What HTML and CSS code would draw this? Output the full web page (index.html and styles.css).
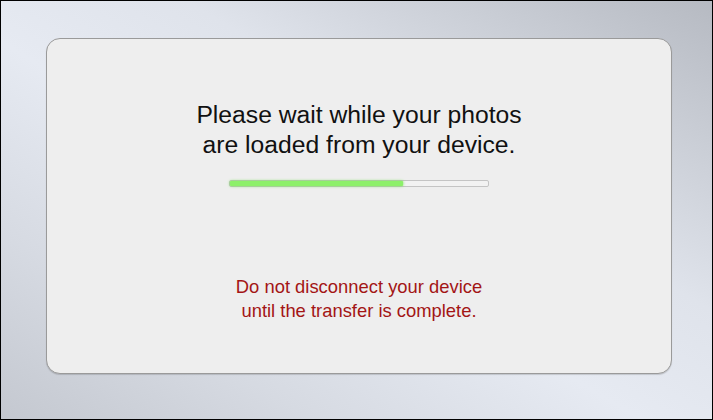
FILE: index.html
```html
<!DOCTYPE html>
<html lang="en">
  <head>
    <meta charset="UTF-8" />
    <meta name="viewport" content="width=device-width, initial-scale=1.0" />
    <title>Importing Photos</title>
    <link rel="stylesheet" href="styles.css">
  </head>
  <body>
    <div class="screen">
      <div class="panel">
        <p class="message">Please wait while your photos<br />are loaded from your device.</p>
        <div class="progress">
          <div class="progress-fill" style="width: 67%"></div>
        </div>
        <p class="warning">Do not disconnect your device<br />until the transfer is complete.</p>
      </div>
    </div>
  </body>
</html>
```

FILE: styles.css
```css
html,
body {
  margin: 0;
  padding: 0;
}

body {
  font-family: "Liberation Sans", Arial, sans-serif;
}

.screen {
  box-sizing: border-box;
  width: 713px;
  height: 420px;
  border: 1px solid #000000;
  padding: 37px 40px 45px 45px;
  background: linear-gradient(to top right, #c4c8d0 0%, #d6dae2 22%, #e6eaf2 45%, #dfe3eb 63%, #c9cdd5 83%, #b6bac2 100%);
}

.panel {
  box-sizing: border-box;
  height: 100%;
  border: 1.5px solid #9a9a9a;
  border-radius: 14px;
  background-color: #eeeeee;
  box-shadow: 0 1px 1px rgba(0, 0, 0, 0.15);
  display: flex;
  flex-direction: column;
  align-items: center;
  padding-top: 61px;
}

.message {
  margin: 0;
  font-size: 24.7px;
  line-height: 30px;
  color: #111111;
  text-align: center;
}

.progress {
  box-sizing: border-box;
  width: 260px;
  height: 7px;
  margin-top: 20px;
  border: 1px solid #c4c4c4;
  border-radius: 2px;
  background-color: #f2f2f2;
}

.progress-fill {
  height: 100%;
  background-color: #8df06a;
  box-shadow: 0 0 3px #6fe24a;
  border-radius: 1px;
}

.warning {
  margin: 88px 0 0;
  font-size: 18.4px;
  line-height: 24px;
  color: #a31515;
  text-align: center;
}
```
